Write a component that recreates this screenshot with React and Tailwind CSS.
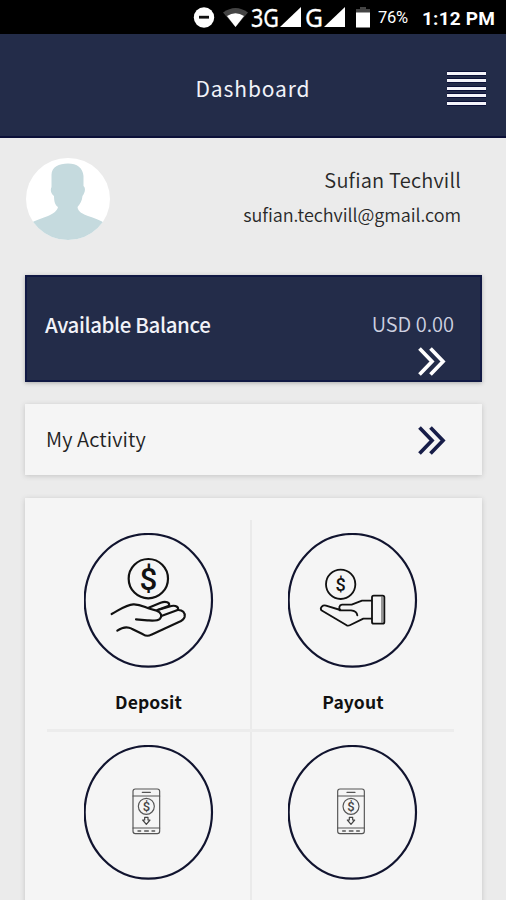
import React from 'react'

const ACTIONS = [
    { label: 'Deposit', icon: DepositIcon },
    { label: 'Payout', icon: PayoutIcon },
    { icon: PhoneIcon, offset: 0 },
    { icon: PhoneIcon, offset: 2 },
]

function StatusBar() {
    return (
        <div className="h-[34px] bg-black text-white flex items-center pl-[193px] shrink-0">
            {/* Do not disturb, wifi, signals and battery */}
            <svg width="183" height="34" viewBox="0 0 183 34" fill="#fff">
                <circle cx="11" cy="17.5" r="10.2" />
                <rect x="6" y="15.8" width="10" height="2.8" fill="#111" />
                <path d="M30 12.5Q42.500 3.500 55 12.500L42.500 27Z" fill="#444" />
                <path d="M34 16Q42.500 10.500 51 16L42.500 27Z" />
                <text x="58" y="27" fontSize="25.500" fontFamily="Noto Sans" textLength="28" lengthAdjust="spacingAndGlyphs" stroke="#fff" strokeWidth="0.300">3G</text>
                <path d="M87 27L108 7V27Z" />
                <text x="112" y="27" fontSize="25.500" fontFamily="Noto Sans" textLength="18" lengthAdjust="spacingAndGlyphs" stroke="#fff" strokeWidth="0.300">G</text>
                <path d="M131 27L152 7V27Z" />
                <path d="M163 13V9H167V7H173V9H177V13Z" fill="#444" />
                <rect x="163" y="12.500" width="14" height="15" />
            </svg>
            <span className="ml-[2px] mt-[3px] w-[44px] text-[16.500px] leading-none tracking-[-0.300px] font-['Roboto',sans-serif]">76%</span>
            <span className="mt-[3px] text-[19px] leading-none font-bold tracking-[0.200px] font-['Roboto',sans-serif] whitespace-nowrap">1:12 PM</span>
        </div>
    )
}

function Header() {
    return (
        <header className="h-[104px] shrink-0 bg-[#232c49] border-b-2 border-[#0b1038] grid grid-cols-[1fr_auto_1fr] items-center px-5 pt-[6px]">
            <span />
            <h1 className="text-[21px] leading-6 tracking-[0.900px] text-[#f1f2f8] font-normal">Dashboard</h1>
            <div className="h-[33px] flex flex-col justify-between justify-self-end">
                {[0, 1, 2, 3, 4].map((i) => (
                    <span key={i} className="block w-[39px] h-[3px] bg-[#f4f4fa] shadow-[0_1px_0_#0b1038,0_-1px_0_#0b1038]" />
                ))}
            </div>
        </header>
    )
}

function Avatar() {
    return (
        <svg width="84" height="82" viewBox="0 0 84 82">
            <defs>
                <clipPath id="avatar">
                    <ellipse cx="42" cy="41" rx="42" ry="41" />
                </clipPath>
            </defs>
            <g clipPath="url(#avatar)">
                <rect width="84" height="82" fill="#fff" />
                <path
                    fill="#c5dade"
                    d="M25.500 29V17C25.500 9 33 5.500 42 5.500S57 10 57.500 18V28C60 30 59 35 56.500 38C56 43 54 46 51.500 49C52 54 57 56 62 58C68 60 74 62 80 66V84H3V66C10 62 17 60 22 58C28 55 31 53 32 49C29 47 28 43 28 38C25 36 24 32 25.500 29Z"
                />
            </g>
        </svg>
    )
}

function DoubleChevron({ className }) {
    return (
        <svg className={className} width="28" height="29" viewBox="0 0 28 29" fill="none" stroke="currentColor" strokeWidth="3.700">
            <path d="M1.500 1.500L14 14.500L1.500 27.500M12.500 1.500L25 14.500L12.500 27.500" />
        </svg>
    )
}

// Icon drawings share a 3x grid, so a stroke of 6 is about 2px
function IconCircle({ children }) {
    return (
        <svg width="130" height="136" viewBox="0 0 390 408" fill="none" stroke="#111" strokeLinecap="round" strokeLinejoin="round">
            <ellipse cx="193" cy="202" rx="191" ry="199" stroke="#11142f" strokeWidth="6.500" />
            {children}
        </svg>
    )
}

function DepositIcon() {
    return (
        <IconCircle>
            <g transform="translate(-42 -38)" strokeWidth="6.500">
                <circle cx="235" cy="175" r="59" />
                <text x="235" y="208" fontSize="94" fontFamily="Roboto" fontWeight="500" textAnchor="middle" fill="#111" stroke="none">$</text>
                <path d="M125 281C148 269 168 253 190 252C212 251 224 261 242 266L260 271C274 276 277 287 270 295C262 303 248 301 232 300L198 297" />
                <path d="M234 263L272 247C288 242 300 246 297 256L262 269" />
                <path d="M266 268L304 257C319 254 328 262 323 269L274 287" />
                <path d="M323 269C338 268 346 278 344 289C342 298 334 302 325 306L244 343Q232 350 219 342L185 325C170 317 156 321 142 331" />
            </g>
        </IconCircle>
    )
}

function PayoutIcon() {
    return (
        <IconCircle>
            <g transform="translate(-24 -38)" strokeWidth="5.500">
                <circle cx="182" cy="192" r="44" />
                <text x="182" y="211" fontSize="54" fontFamily="Roboto" fontWeight="500" textAnchor="middle" fill="#111" stroke="none">$</text>
                <path d="M274 241H246L215 253H186C178 254 175 263 181 269L138 256C128 253 119 262 124 270L200 315Q205 317 211 314L250 295H274" />
                <path d="M179 270H213C225 271 231 276 232 285" />
                <rect x="276" y="226" width="37" height="84" rx="5" />
                <path d="M306 230V306" strokeWidth="2.500" />
            </g>
        </IconCircle>
    )
}

function PhoneIcon({ offset = 0 }) {
    return (
        <IconCircle>
            <g transform={`translate(${offset - 42} -74)`} stroke="#555" strokeWidth="3.500">
                <rect x="189" y="206" width="80" height="134" rx="7" />
                <path d="M189 227H269M189 323H269" />
                <path d="M217 216H241M204 332H212M224 332H235M246 332H254" strokeWidth="4" />
                <circle cx="229" cy="258" r="24" />
                <text x="229" y="272" fontSize="39" fontFamily="Roboto" fontWeight="500" textAnchor="middle" fill="#444" stroke="none">$</text>
                <path d="M224 291H234V299H240L229 312L218 299H224Z" stroke="#444" />
            </g>
        </IconCircle>
    )
}

function ActionCell({ item, index }) {
    const Icon = item.icon
    return (
        <div
            className={`flex flex-col items-center ${index % 2 === 0 ? 'w-[203px]' : 'w-[202px]'} ${index < 2 ? 'h-[209px]' : 'h-[211px]'} pt-[13px]`}
        >
            <Icon offset={item.offset} />
            {item.label && (
                <span className="mt-[21px] text-[17.500px] leading-6 font-bold tracking-[0.100px] text-[#111]">{item.label}</span>
            )}
        </div>
    )
}

export default function App() {
    return (
        <div className="w-full h-[900px] overflow-hidden flex flex-col bg-[#ebebeb] font-['Noto_Sans_CJK_SC','Noto_Sans',sans-serif]">
            <StatusBar />
            <Header />

            {/* Profile */}
            <section className="h-[137px] shrink-0 flex justify-between pl-[26px] pr-[45px] pt-5">
                <Avatar />
                <div className="text-right text-[#282828] font-[350] pt-[8px]">
                    <p className="text-[20px] leading-7 tracking-[0.200px]">Sufian Techvill</p>
                    <p className="mt-[6px] text-[18px] leading-7 tracking-[-0.050px]">sufian.techvill@gmail.com</p>
                </div>
            </section>

            <main className="flex flex-col pl-[25px] pr-6 shrink-0">
                {/* Balance */}
                <div className="h-[107px] bg-[#232c49] border-2 border-[#111944] shadow-[0_1px_4px_#aaa] pl-[18px] pr-[26px] pt-[33px]">
                    <div className="flex justify-between items-center leading-7">
                        <span className="text-[20.500px] font-medium tracking-[-0.380px] text-[#f1f2f8]">Available Balance</span>
                        <span className="text-[20px] font-[350] text-[#ced1e0]">USD 0.00</span>
                    </div>
                    <DoubleChevron className="ml-auto mr-[8px] mt-[9px] text-white" />
                </div>

                {/* Activity */}
                <div className="mt-[22px] h-[71px] bg-[#f5f5f5] shadow-[0_1px_5px_#c4c4c4] flex items-center justify-between pl-[21px] pr-[36px]">
                    <span className="text-[20px] leading-7 pb-[2px] tracking-[0.100px] font-[350] text-[#222]">My Activity</span>
                    <DoubleChevron className="mt-[2px] text-[#171d48]" />
                </div>

                {/* Actions */}
                <div className="mt-[23px] h-[444px] bg-[#f5f5f5] shadow-[0_1px_5px_#c4c4c4] pt-[22px] pl-[22px] pr-[28px]">
                    {[0, 2].map((start) => (
                        <div key={start} className={start === 0 ? 'flex border-b-[3px] border-[#ececec]' : 'flex'}>
                            <ActionCell item={ACTIONS[start]} index={start} />
                            <div className="w-[2px] bg-[#eaeaea]" />
                            <ActionCell item={ACTIONS[start + 1]} index={start + 1} />
                        </div>
                    ))}
                </div>
            </main>
        </div>
    )
}
